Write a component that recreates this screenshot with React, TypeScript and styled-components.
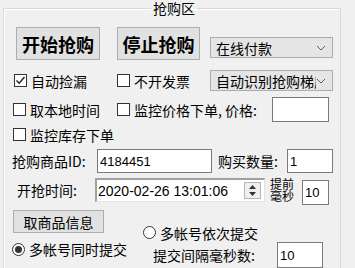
import React from 'react';
import styled, { createGlobalStyle } from 'styled-components';

const GlobalStyle = createGlobalStyle`
  html, body {
    margin: 0;
    padding: 0;
    background: #f0f0f0;
  }
  body {
    font-family: "Noto Sans CJK SC", "Noto Sans", sans-serif;
    font-size: 14px;
    color: #000;
    overflow: hidden;
  }
`;

const Group = styled.fieldset`
  box-sizing: border-box;
  margin: 0 0 0 3px;
  padding: 0;
  width: 338px;
  height: 280px;
  border: 1px solid #d9d9d9;
  box-shadow: inset 1px 1px 0 #fff;
`;

const Legend = styled.legend`
  margin-left: 147px;
  padding: 0 2px;
  font-size: 14px;
  line-height: 16px;
`;

const Body = styled.div`
  display: flex;
  flex-direction: column;
  padding-left: 9px;
`;

const Row = styled.div<{ $top: number; $h: number; $align?: string }>`
  display: flex;
  align-items: ${(p) => p.$align || 'center'};
  margin-top: ${(p) => p.$top}px;
  height: ${(p) => p.$h}px;
`;

const Cell = styled.div<{ $w: number; $indent?: number }>`
  display: flex;
  align-items: center;
  width: ${(p) => p.$w}px;
  flex-shrink: 0;
  margin-left: ${(p) => p.$indent || 0}px;
  white-space: nowrap;
`;

const BigButton = styled.button<{ $w: number; $gap?: number }>`
  box-sizing: border-box;
  width: ${(p) => p.$w}px;
  height: 33px;
  margin-left: ${(p) => p.$gap || 0}px;
  padding: 0;
  background: #e1e1e1;
  border: 1px solid #adadad;
  font-family: "Noto Sans CJK SC", sans-serif;
  font-size: 18px;
  font-weight: bold;
  color: #000;
`;

const SmallButton = styled.button`
  box-sizing: border-box;
  width: 91px;
  height: 23px;
  padding: 0;
  background: #e1e1e1;
  border: 1px solid #adadad;
  font-family: "Noto Sans CJK SC", sans-serif;
  font-size: 14px;
  line-height: 16px;
  color: #000;
`;

const Select = styled.div<{ $gap: number; $lift?: number }>`
  box-sizing: border-box;
  display: flex;
  align-items: center;
  width: 123px;
  height: 21px;
  margin-left: ${(p) => p.$gap}px;
  margin-bottom: ${(p) => p.$lift || 0}px;
  padding: 0 6px 0 5px;
  background: #e5e5e5;
  border: 1px solid #acacac;
  line-height: 18px;
`;

const SelectText = styled.span<{ $clip?: boolean }>`
  flex: 1;
  overflow: ${(p) => (p.$clip ? 'hidden' : 'visible')};
  white-space: nowrap;
`;

const Box = styled.span<{ $round?: boolean }>`
  box-sizing: border-box;
  display: inline-flex;
  align-items: center;
  justify-content: center;
  width: 13px;
  height: 13px;
  margin-right: 4px;
  background: #fff;
  border: 1px solid #333;
  border-radius: ${(p) => (p.$round ? '50%' : '0')};
  flex-shrink: 0;
`;

const Dot = styled.span`
  width: 7px;
  height: 7px;
  border-radius: 50%;
  background: #333;
`;

const Label = styled.span`
  line-height: 16px;
`;

const Input = styled.div<{ $w: number; $h: number; $gap?: number; $top?: number }>`
  box-sizing: border-box;
  display: flex;
  align-items: center;
  width: ${(p) => p.$w}px;
  height: ${(p) => p.$h}px;
  margin-left: ${(p) => p.$gap || 0}px;
  margin-top: ${(p) => p.$top || 0}px;
  padding-left: 2px;
  background: #fff;
  border: 1px solid #7a7a7a;
  font-family: "Liberation Sans", sans-serif;
  font-size: 13px;
  flex-shrink: 0;
`;

const DateBox = styled.div`
  box-sizing: border-box;
  display: flex;
  align-items: center;
  width: 170px;
  height: 24px;
  padding: 0 3px 0 1px;
  background: #fff;
  border-style: solid;
  border-width: 2px 1px 1px 2px;
  border-color: #a0a0a0 #e3e3e3 #e3e3e3 #a0a0a0;
  font-family: "Liberation Sans", sans-serif;
  font-size: 14px;
  flex-shrink: 0;
`;

const DateText = styled.span`
  flex: 1;
  white-space: nowrap;
`;

const Spin = styled.span`
  box-sizing: border-box;
  display: flex;
  flex-direction: column;
  align-items: center;
  justify-content: space-evenly;
  width: 17px;
  height: 17px;
  background: #f0f0f0;
  border: 1px solid #b5b5b5;
`;

const Tiny = styled.span`
  width: 24px;
  margin-left: 5px;
  font-size: 12px;
  line-height: 12px;
  white-space: normal;
  word-break: break-all;
`;

const Bottom = styled.div`
  display: grid;
  grid-template-columns: 130px auto;
  margin-top: 5px;
`;

const Column = styled.div<{ $pad?: number }>`
  display: flex;
  flex-direction: column;
  padding-top: ${(p) => p.$pad || 0}px;
`;

const Chevron = () => (
  <svg width="10" height="6" viewBox="0 0 10 6">
    <polyline points="1,1 5,5 9,1" fill="none" stroke="#606060" strokeWidth="1" />
  </svg>
);

const Check = ({ on, label }: { on?: boolean; label: string }) => (
  <>
    <Box>
      {on && (
        <svg width="11" height="11" viewBox="0 0 11 11">
          <polyline points="1.5,5.5 4.2,8.3 9.5,2" fill="none" stroke="#222" strokeWidth="1.4" />
        </svg>
      )}
    </Box>
    <Label>{label}</Label>
  </>
);

const Radio = ({ on, label }: { on?: boolean; label: string }) => (
  <>
    <Box $round>{on && <Dot />}</Box>
    <Label>{label}</Label>
  </>
);

const App: React.FC = () => {
  return (
    <>
      <GlobalStyle />
      <Group>
        <Legend>抢购区</Legend>
        <Body>
          <Row $top={11} $h={33} $align="flex-end">
            <BigButton $w={84} $gap={3}>开始抢购</BigButton>
            <BigButton $w={83} $gap={17}>停止抢购</BigButton>
            <Select $gap={10} $lift={2}>
              <SelectText>在线付款</SelectText>
              <Chevron />
            </Select>
          </Row>
          <Row $top={10} $h={21}>
            <Cell $w={103} $indent={1}>
              <Check on label="自动捡漏" />
            </Cell>
            <Cell $w={93}>
              <Check label="不开发票" />
            </Cell>
            <Select $gap={0}>
              <SelectText $clip>自动识别抢购梯度</SelectText>
              <Chevron />
            </Select>
          </Row>
          <Row $top={6} $h={25}>
            <Cell $w={104}>
              <Check label="取本地时间" />
            </Cell>
            <Cell $w={155}>
              <Check label="监控价格下单, 价格:" />
            </Cell>
            <Input $w={57} $h={25} />
          </Row>
          <Row $top={4} $h={17}>
            <Cell $w={104}>
              <Check label="监控库存下单" />
            </Cell>
          </Row>
          <Row $top={6} $h={24}>
            <Cell $w={85} $indent={-1}>
              <Label>抢购商品ID:</Label>
            </Cell>
            <Input $w={115} $h={24}>4184451</Input>
            <Cell $w={69} $indent={6}>
              <Label>购买数量:</Label>
            </Cell>
            <Input $w={46} $h={24}>1</Input>
          </Row>
          <Row $top={5} $h={27} $align="flex-start">
            <Cell $w={78} $indent={4} style={{ height: 24 }}>
              <Label>开抢时间:</Label>
            </Cell>
            <DateBox>
              <DateText>2020-02-26 13:01:06</DateText>
              <Spin>
                <svg width="7" height="4" viewBox="0 0 7 4">
                  <polygon points="0,4 3.5,0 7,4" fill="#333" />
                </svg>
                <svg width="7" height="4" viewBox="0 0 7 4">
                  <polygon points="0,0 3.5,4 7,0" fill="#333" />
                </svg>
              </Spin>
            </DateBox>
            <Tiny>提前毫秒</Tiny>
            <Input $w={27} $h={25} $gap={8} $top={2}>10</Input>
          </Row>
          <Bottom>
            <Column>
              <SmallButton>取商品信息</SmallButton>
              <Row $top={9} $h={14}>
                <Cell $w={130} $indent={-1}>
                  <Radio on label="多帐号同时提交" />
                </Cell>
              </Row>
            </Column>
            <Column $pad={15}>
              <Row $top={0} $h={15}>
                <Radio label="多帐号依次提交" />
              </Row>
              <Row $top={2} $h={26}>
                <Cell $w={124} $indent={10}>
                  <Label>提交间隔毫秒数:</Label>
                </Cell>
                <Input $w={46} $h={26}>10</Input>
              </Row>
            </Column>
          </Bottom>
        </Body>
      </Group>
    </>
  );
};

export default App;
